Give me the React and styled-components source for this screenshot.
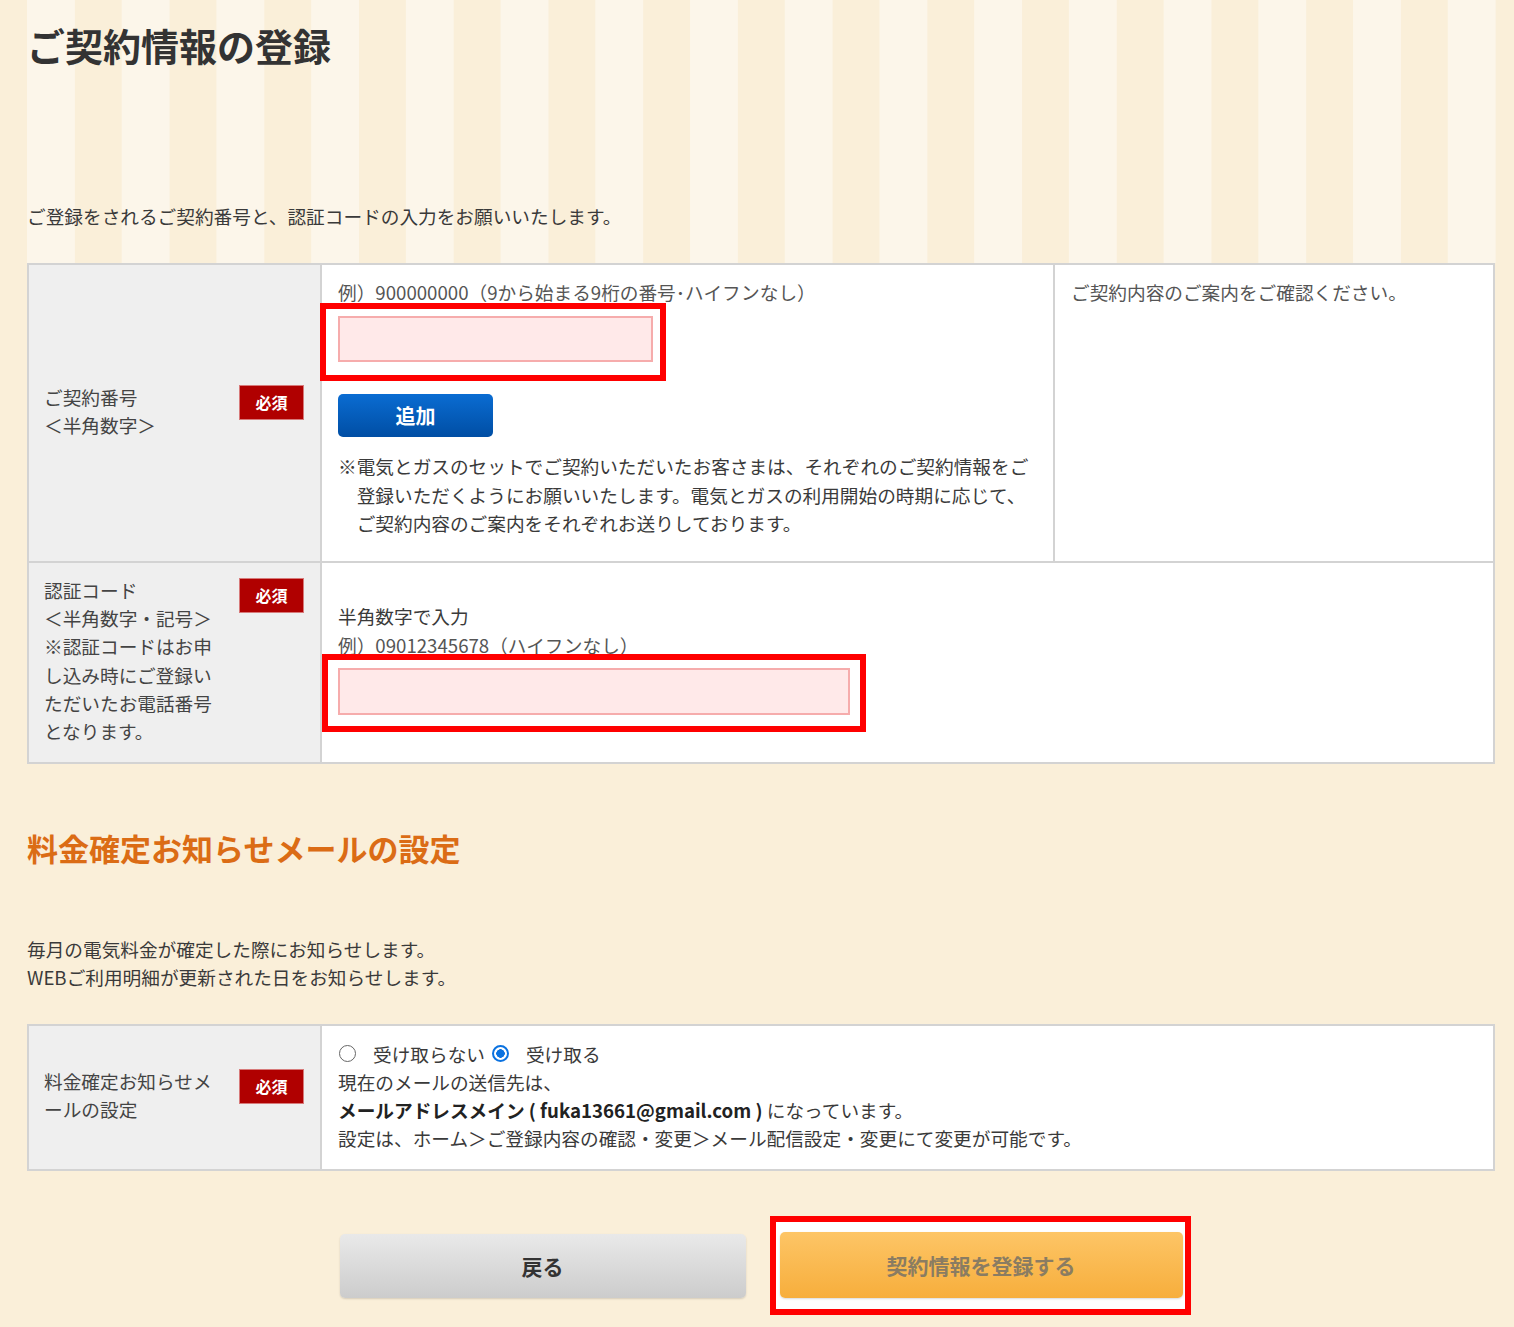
import React from "react";
import styled, { createGlobalStyle } from "styled-components";

const GlobalStyle = createGlobalStyle`
  html, body {
    margin: 0;
    padding: 0;
  }
  body {
    background: #faefd9;
    font-family: "Noto Sans CJK JP", "Noto Sans", sans-serif;
    font-size: 18.67px;
    line-height: 28.3px;
    color: #3a3a3a;
  }
  * {
    box-sizing: border-box;
  }
`;

const Page = styled.div`
  width: 1514px;
  padding-bottom: 30px;
`;

const Header = styled.header`
  height: 263px;
  padding: 22px 19px 0 27px;
  background-color: #faefd9;
  background-image: linear-gradient(90deg, #fcf6ea 0 50%, #faefd9 50% 100%);
  background-size: 94.73px 100%;
  background-position: 27px 0;
`;

const Title = styled.h1`
  margin: 0;
  font-size: 38px;
  line-height: 46px;
  font-weight: 700;
  color: #333;
`;

const Lead = styled.p`
  margin: ${(p) => p.$top || 0}px 0 0;
`;

const Main = styled.main`
  padding: 0 19px 0 27px;
`;

const FormGrid = styled.div`
  display: grid;
  grid-template-columns: ${(p) => p.$cols};
  gap: 2px;
  padding: 2px;
  margin-top: ${(p) => p.$top || 0}px;
  background: #d3d3d3;
`;

/* grey header cell; a little more room below so the text sits slightly high */
const LabelCell = styled.div`
  display: flex;
  align-items: center;
  padding: ${(p) => p.$pt ?? 12.5}px 16px ${(p) => p.$pb ?? 16.5}px 15px;
  background: #efefef;
`;

const LabelRow = styled.div`
  display: flex;
  justify-content: space-between;
  align-items: flex-start;
  width: 100%;
`;

const LabelText = styled.div`
  width: 180px;
  color: #444;
`;

const Required = styled.span`
  display: flex;
  align-items: center;
  justify-content: center;
  width: 65px;
  height: 35px;
  margin-top: 2px;
  background: #b00000;
  border: 1px solid #d77a7a;
  color: #fff;
  font-size: 16px;
  font-weight: 700;
`;

const ValueCell = styled.div`
  display: flex;
  flex-direction: column;
  justify-content: ${(p) => (p.$middle ? "center" : "flex-start")};
  grid-column: span ${(p) => p.$span || 1};
  padding: ${(p) => p.$pad || "13px 16px"};
  background: #fff;
`;

const Hint = styled.div`
  color: #555;
`;

const Marked = styled.div`
  position: relative;
  z-index: 0;
  align-self: flex-start;
  margin-top: ${(p) => p.$mt || 0}px;

  &::before {
    content: "";
    position: absolute;
    top: -${(p) => p.$t}px;
    right: -${(p) => p.$r}px;
    bottom: -${(p) => p.$b}px;
    left: -${(p) => p.$l}px;
    border: 6px solid #ff0000;
    background: #fff;
    z-index: -1;
  }
`;

const TextInput = styled.input`
  display: block;
  width: ${(p) => p.$w}px;
  height: ${(p) => p.$h || 46}px;
  margin: 0;
  padding: 0 10px;
  background: #ffe9e9;
  border: 2px solid #f6acac;
  border-radius: 0;
  outline: none;
  font: inherit;
`;

const AddButton = styled.button`
  width: 155px;
  height: 43px;
  margin-top: 32px;
  border: none;
  border-radius: 5px;
  background: linear-gradient(#0a6cd2, #004ea4);
  color: #fff;
  font-family: inherit;
  font-size: 20px;
  font-weight: 700;
  cursor: pointer;
`;

const Note = styled.p`
  margin: 15px 0 0;
  padding-left: 1em;
  text-indent: -1em;
`;

const SectionTitle = styled.h2`
  margin: 64px 0 0;
  font-size: 31px;
  line-height: 40px;
  font-weight: 700;
  color: #db6c15;
`;

const RadioRow = styled.div`
  display: flex;
  align-items: center;
`;

const RadioLabel = styled.label`
  display: inline-flex;
  align-items: center;
  gap: 17px;
  margin-right: 7px;
`;

const Radio = styled.input.attrs({ type: "radio" })`
  appearance: none;
  width: 17px;
  height: 17px;
  margin: 0 0 0 ${(p) => p.$ml || 0}px;
  border-radius: 50%;
  border: 1.5px solid #666;
  background: #fff;

  &:checked {
    border: 2px solid #0b72e0;
    background: radial-gradient(circle, #0b72e0 0 4px, #fff 4.5px);
  }
`;

const Strong = styled.b`
  font-weight: 700;
  color: #222;
`;

const Actions = styled.div`
  display: flex;
  justify-content: center;
  align-items: flex-end;
  gap: 34px;
  margin-top: 61px;
`;

const ActionButton = styled.button`
  width: ${(p) => p.$w}px;
  height: ${(p) => p.$h}px;
  border: none;
  border-radius: 5px;
  font-family: inherit;
  font-size: 21px;
  font-weight: 700;
  cursor: pointer;
  color: ${(p) => (p.$primary ? "#8a7c62" : "#333")};
  background: ${(p) =>
    p.$primary
      ? "linear-gradient(#fdc566, #f7ae3c)"
      : "linear-gradient(#e9e9e9, #cccccc)"};
  box-shadow: 0 1px 2px rgba(0, 0, 0, 0.15);
`;

export default function App() {
  return (
    <Page>
      <GlobalStyle />
      <Header>
        <Title>ご契約情報の登録</Title>
        <Lead $top={134}>ご登録をされるご契約番号と、認証コードの入力をお願いいたします。</Lead>
      </Header>

      <Main>
        <FormGrid $cols="291px 731px 1fr">
          <LabelCell>
            <LabelRow>
              <LabelText>
                ご契約番号
                <br />
                ＜半角数字＞
              </LabelText>
              <Required>必須</Required>
            </LabelRow>
          </LabelCell>
          <ValueCell $pad="13px 16px 24px">
            <Hint>例）900000000（9から始まる9桁の番号･ハイフンなし）</Hint>
            <Marked $mt={10} $t={13} $r={13} $b={19} $l={18}>
              <TextInput $w={315} />
            </Marked>
            <AddButton>追加</AddButton>
            <Note>
              ※電気とガスのセットでご契約いただいたお客さまは、それぞれのご契約情報をご登録いただくようにお願いいたします。電気とガスの利用開始の時期に応じて、ご契約内容のご案内をそれぞれお送りしております。
            </Note>
          </ValueCell>
          <ValueCell $pad="13px 16px">
            <Hint>ご契約内容のご案内をご確認ください。</Hint>
          </ValueCell>

          <LabelCell>
            <LabelRow>
              <LabelText>
                認証コード
                <br />
                ＜半角数字・記号＞
                <br />
                ※認証コードはお申し込み時にご登録いただいたお電話番号となります。
              </LabelText>
              <Required>必須</Required>
            </LabelRow>
          </LabelCell>
          <ValueCell $span={2} $middle $pad="14px 16px 22px">
            <div>半角数字で入力</div>
            <Hint>例）09012345678（ハイフンなし）</Hint>
            <Marked $mt={9} $t={14} $r={16} $b={17} $l={16}>
              <TextInput $w={512} $h={47} />
            </Marked>
          </ValueCell>
        </FormGrid>

        <SectionTitle>料金確定お知らせメールの設定</SectionTitle>
        <Lead $top={67}>
          毎月の電気料金が確定した際にお知らせします。
          <br />
          WEBご利用明細が更新された日をお知らせします。
        </Lead>

        <FormGrid $cols="291px 1fr" $top={32}>
          <LabelCell $pt={13.5} $pb={17.5}>
            <LabelRow>
              <LabelText>料金確定お知らせメールの設定</LabelText>
              <Required>必須</Required>
            </LabelRow>
          </LabelCell>
          <ValueCell $middle $pad="14px 16px 16px">
            <RadioRow>
              <RadioLabel>
                <Radio name="notice" $ml={1} />
                受け取らない
              </RadioLabel>
              <RadioLabel>
                <Radio name="notice" defaultChecked />
                受け取る
              </RadioLabel>
            </RadioRow>
            <div>現在のメールの送信先は、</div>
            <div>
              <Strong>メールアドレスメイン ( fuka13661@gmail.com )</Strong> になっています。
            </div>
            <div>設定は、ホーム＞ご登録内容の確認・変更＞メール配信設定・変更にて変更が可能です。</div>
          </ValueCell>
        </FormGrid>

        <Actions>
          <ActionButton $w={406} $h={64}>
            戻る
          </ActionButton>
          <Marked $t={16} $r={8} $b={17} $l={10}>
            <ActionButton $primary $w={403} $h={66}>
              契約情報を登録する
            </ActionButton>
          </Marked>
        </Actions>
      </Main>
    </Page>
  );
}
